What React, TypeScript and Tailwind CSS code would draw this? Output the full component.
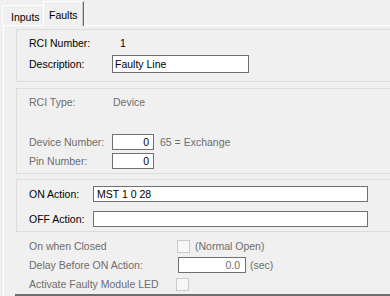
const FONT = "font-['Liberation_Sans',Arial,sans-serif]";

function Group({ className = '', children }: { className?: string; children: React.ReactNode }) {
  return <div className={`border border-[#dcdcdc] pl-[12px] ${className}`}>{children}</div>;
}

function Box({ className = '', children }: { className?: string; children?: React.ReactNode }) {
  return (
    <div className={`flex items-center bg-white border border-[#707070] ${className}`}>{children}</div>
  );
}

function Check() {
  return <div className="w-[13px] h-[13px] bg-[#f7f7f7] border border-[#cbcbcb]" />;
}

export default function App() {
  return (
    <div className={`w-[390px] h-[296px] overflow-hidden bg-[#f0f0f0] text-[10.5px] leading-none text-black ${FONT}`}>
      {/* tab strip */}
      <div className="h-[25px] flex items-end pl-[2px]">
        <div className="w-[41px] h-[20px] border-t border-l border-white pl-[8px] pt-[6px]">Inputs</div>
        <div className="relative z-10 w-[41px] h-[25px] -mb-[1px] bg-[#f0f0f0] border-t border-l border-r border-white border-r-[#696969] pl-[5px] pt-[8px] shadow-[inset_-1px_0_0_#c8c8c8]">
          Faults
        </div>
      </div>

      {/* tab page */}
      <div className="ml-[3px] w-[430px] h-[272px] border-t border-l border-white pl-[12px] pt-[3px]">
        <Group className="h-[53px] pt-[4px]">
          <div className="flex items-center h-[18px]">
            <span className="w-[83px]">RCI Number:</span>
            <span className="pl-[8px]">1</span>
          </div>
          <div className="flex items-center h-[18px] mt-[3px]">
            <span className="w-[83px]">Description:</span>
            <Box className="w-[137px] h-[18px] pl-[2px]">Faulty Line</Box>
          </div>
        </Group>

        <Group className="h-[86px] mt-[6px] pt-[5px] text-[#6d6d6d]">
          <div className="flex items-center h-[16px]">
            <span className="w-[84px]">RCI Type:</span>
            <span>Device</span>
          </div>
          <div className="flex items-center h-[16px] mt-[24px]">
            <span className="w-[83px]">Device Number:</span>
            <Box className="w-[42px] h-[16px] justify-end pr-[4px] text-black">0</Box>
            <span className="ml-[6px]">65 = Exchange</span>
          </div>
          <div className="flex items-center h-[16px] mt-[3px]">
            <span className="w-[83px]">Pin Number:</span>
            <Box className="w-[42px] h-[16px] justify-end pr-[4px] text-black">0</Box>
          </div>
        </Group>

        <Group className="h-[53px] mt-[5px] pt-[6px]">
          <div className="flex items-center h-[16px]">
            <span className="w-[64px]">ON Action:</span>
            <Box className="w-[275px] h-[16px] pl-[3px]">MST 1 0 28</Box>
          </div>
          <div className="flex items-center h-[16px] mt-[9px]">
            <span className="w-[64px]">OFF Action:</span>
            <Box className="w-[275px] h-[16px]" />
          </div>
        </Group>

        <div className="pl-[13px] text-[#6d6d6d]">
          <div className="flex items-center h-[13px] mt-[8px]">
            <span className="w-[148px]">On when Closed</span>
            <Check />
            <span className="ml-[5px]">(Normal Open)</span>
          </div>
          <div className="flex items-center h-[16px] mt-[4px]">
            <span className="w-[149px]">Delay Before ON Action:</span>
            <Box className="w-[68px] h-[16px] justify-end pr-[5px]">0.0</Box>
            <span className="ml-[4px]">(sec)</span>
          </div>
          <div className="flex items-center h-[13px] mt-[5px]">
            <span className="w-[147px]">Activate Faulty Module LED</span>
            <Check />
          </div>
        </div>
        <div className="mt-[3px] -ml-[1px] border-t-2 border-[#6e6e6e]" />
      </div>
    </div>
  );
}
